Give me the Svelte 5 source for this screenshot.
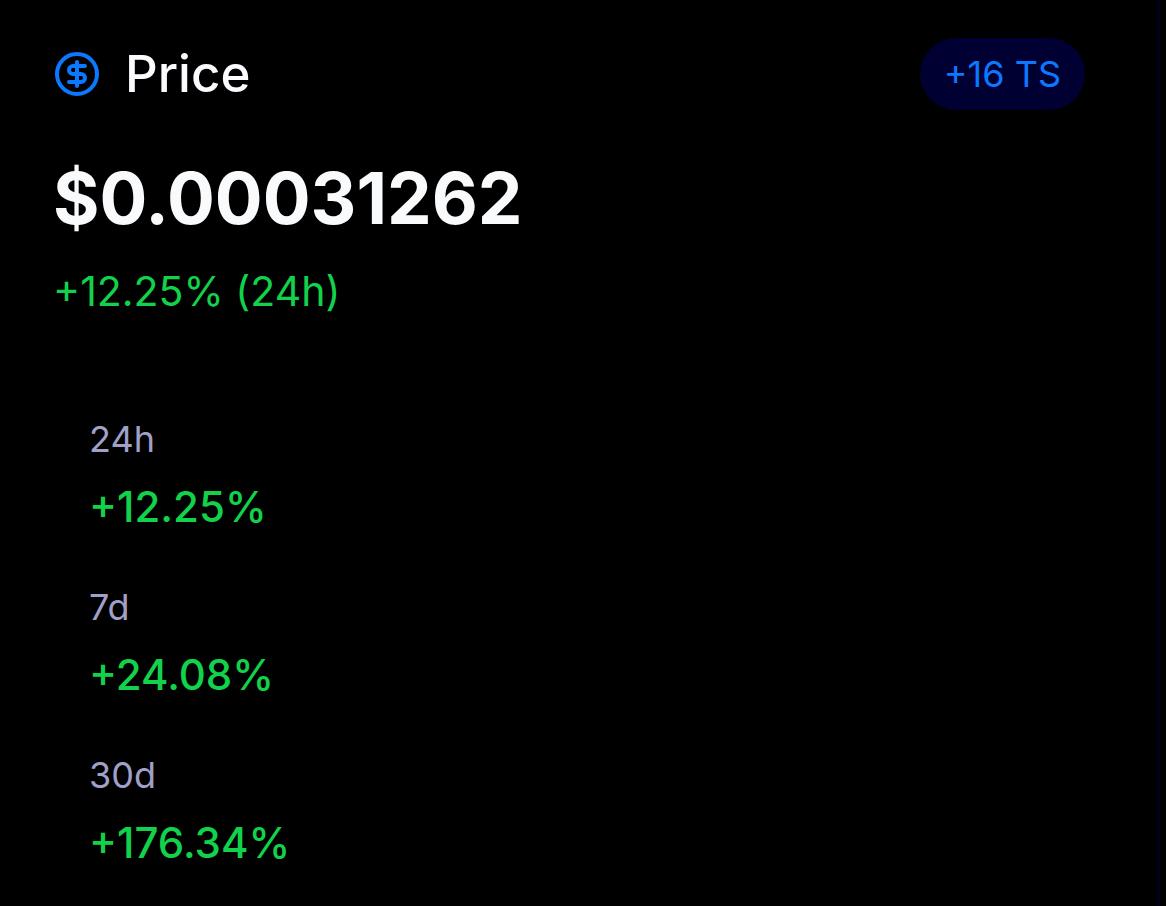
<script>
    let token = {
        price: '$0.00031262',
        change: '+12.25% (24h)',
        score: '+16 TS'
    };

    let periods = [
        { label: '24h', value: '+12.25%' },
        { label: '7d', value: '+24.08%' },
        { label: '30d', value: '+176.34%' }
    ];
</script>

<article class="card">
    <header>
        <svg class="icon" viewBox="0 0 24 24" aria-hidden="true">
            <circle cx="12" cy="12" r="10" />
            <path d="M16 8h-6a2 2 0 1 0 0 4h4a2 2 0 1 1 0 4H8" />
            <path d="M12 18V6" />
        </svg>
        <h2>Price</h2>
        <span class="badge">{token.score}</span>
    </header>

    <p class="price">{token.price}</p>
    <p class="change">{token.change}</p>

    <dl>
        {#each periods as period}
            <div class="period">
                <dt>{period.label}</dt>
                <dd>{period.value}</dd>
            </div>
        {/each}
    </dl>
</article>

<style>
    :global(body) {
        background: #000;
    }

    .card {
        box-sizing: border-box;
        min-height: 100vh;
        margin-right: 6px;
        padding: 38px 72px 36px 53px;
        border-right: 3px solid #00001f;
        background: #000;
        color: #f8fafc;
        font-family: Inter, "Liberation Sans", sans-serif;
    }

    header {
        display: flex;
        align-items: center;
        gap: 24px;
    }

    .icon {
        width: 48px;
        height: 48px;
        fill: none;
        stroke: #0a78ff;
        stroke-width: 2;
        stroke-linecap: round;
        stroke-linejoin: round;
    }

    h2 {
        margin: 0;
        color: #fafaff;
        font-size: 51px;
        font-weight: 500;
        line-height: 72px;
    }

    .badge {
        margin-left: auto;
        padding: 0 24px;
        border-radius: 36px;
        background: #000033;
        color: #0a78ff;
        font-size: 36px;
        line-height: 72px;
    }

    p,
    dl,
    dd {
        margin: 0;
    }

    .price {
        margin-top: 46px;
        font-size: 71px;
        font-weight: 700;
        line-height: 84px;
    }

    .change {
        margin-top: 20px;
        color: #12d24b;
        font-size: 41px;
        line-height: 62px;
    }

    dl {
        display: flex;
        flex-direction: column;
        gap: 46px;
        margin-top: 94px;
        padding: 0 36px;
    }

    .period {
        display: flex;
        flex-direction: column;
        gap: 14px;
    }

    dt {
        color: #a0a0c8;
        font-size: 36px;
        line-height: 46px;
    }

    dd {
        color: #12d24b;
        font-size: 42px;
        font-weight: 500;
        line-height: 62px;
    }
</style>
